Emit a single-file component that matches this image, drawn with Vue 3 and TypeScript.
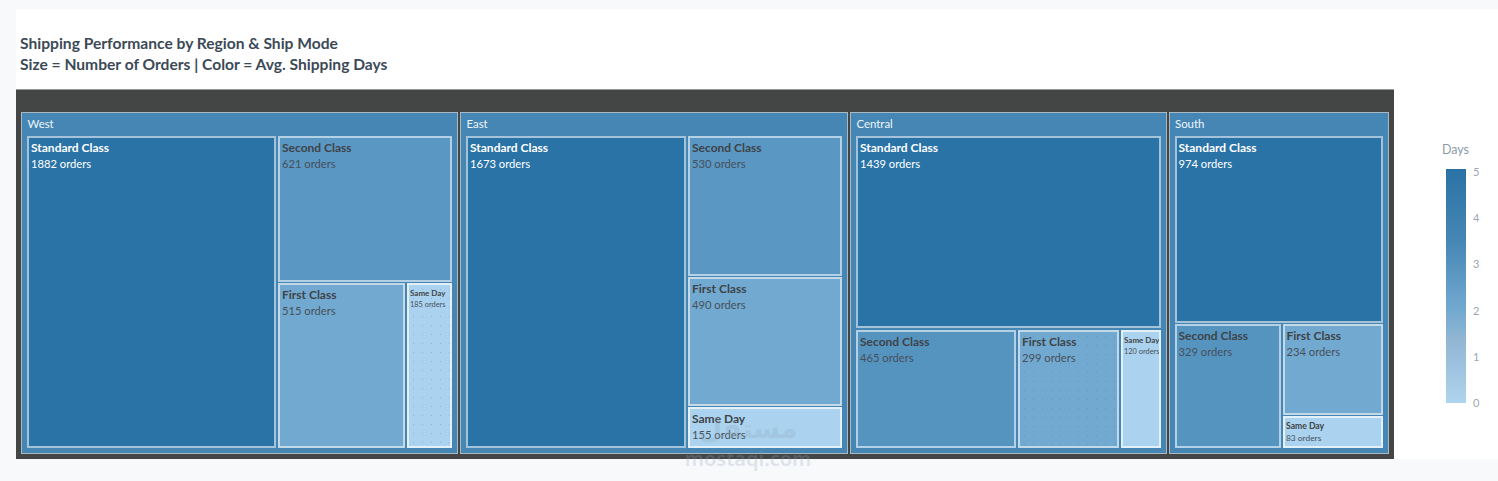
<script setup lang="ts">
const ticks: number[] = [5, 4, 3, 2, 1, 0]
</script>

<template>
  <div class="page">
    <div class="panel">
      <div class="head">
        <div class="titles">
          <div>Shipping Performance by Region &amp; Ship Mode</div>
          <div>Size = Number of Orders | Color = Avg. Shipping Days</div>
        </div>
      </div>
      <div class="chart">
        <div class="map">
          <section class="region west">
            <h3>West</h3>
            <div class="body row">
              <div class="leaf std w1"><b>Standard Class</b><span>1882 orders</span></div>
              <div class="col tight grow">
                <div class="leaf sec wsec"><b>Second Class</b><span>621 orders</span></div>
                <div class="row grow">
                  <div class="leaf fst grow"><b>First Class</b><span>515 orders</span></div>
                  <div class="leaf day tiny wsame dots"><b>Same Day</b><span>185 orders</span></div>
                </div>
              </div>
            </div>
          </section>
          <section class="region east">
            <h3>East</h3>
            <div class="body row">
              <div class="leaf std e1"><b>Standard Class</b><span>1673 orders</span></div>
              <div class="col tight grow">
                <div class="leaf sec esec"><b>Second Class</b><span>530 orders</span></div>
                <div class="leaf fst efst"><b>First Class</b><span>490 orders</span></div>
                <div class="leaf day grow"><b>Same Day</b><span>155 orders</span></div>
              </div>
            </div>
          </section>
          <section class="region central">
            <h3>Central</h3>
            <div class="body col">
              <div class="leaf std c1"><b>Standard Class</b><span>1439 orders</span></div>
              <div class="row grow">
                <div class="leaf sec2 csec dots"><b>Second Class</b><span>465 orders</span></div>
                <div class="leaf fst cfst dots"><b>First Class</b><span>299 orders</span></div>
                <div class="leaf day tiny grow"><b>Same Day</b><span>120 orders</span></div>
              </div>
            </div>
          </section>
          <section class="region south">
            <h3>South</h3>
            <div class="body col tight">
              <div class="leaf std s1"><b>Standard Class</b><span>974 orders</span></div>
              <div class="row grow">
                <div class="leaf sec2 ssec"><b>Second Class</b><span>329 orders</span></div>
                <div class="col tight grow">
                  <div class="leaf fst grow"><b>First Class</b><span>234 orders</span></div>
                  <div class="leaf day small ssame"><b>Same Day</b><span>83 orders</span></div>
                </div>
              </div>
            </div>
          </section>
        </div>
        <aside class="legend">
          <div class="legend-title">Days</div>
          <div class="scale">
            <div class="bar"></div>
            <div class="ticks">
              <span v-for="t in ticks" :key="t">{{ t }}</span>
            </div>
          </div>
        </aside>
      </div>
    </div>
    <div class="mark" aria-hidden="true">
      <div class="mark-ar">مستقل</div>
      <div class="mark-en">mostaqi.com</div>
    </div>
  </div>
</template>

<style>
html, body { margin: 0; background: #f8f9fb; }
</style>

<style scoped>
.page {
  position: relative;
  height: 481px;
  overflow: hidden;
  padding: 9px 0 0 16px;
  box-sizing: border-box;
  background: #f8f9fb;
  font-family: Lato, "Noto Sans", sans-serif;
}
.panel { background: #fff; height: 450px; display: flex; flex-direction: column; }
.head { height: 80px; box-sizing: border-box; padding: 24px 0 0 4px; }
.titles {
  font-size: 15.6px;
  line-height: 21px;
  font-weight: 700;
  color: #3c4a57;
}
.chart { display: flex; height: 370px; }
.map {
  width: 1378px;
  box-sizing: border-box;
  background: #444545;
  border-top: 1px solid #9a9a9a;
  padding: 22px 5px 5px;
  display: flex;
  gap: 2px;
}
.region {
  box-sizing: border-box;
  background: #4586b5;
  border: 1px solid #a9b9c4;
  padding: 0 5px 5px;
  display: flex;
  flex-direction: column;
}
.west { width: 437px; }
.east { width: 388px; }
.central { width: 316.5px; }
.south { width: 220.5px; }
.region h3 {
  margin: 0;
  height: 23px;
  padding-left: 0.5px;
  line-height: 22px;
  font-size: 11.4px;
  font-weight: 400;
  color: #eef5fa;
}
.body { flex: 1; min-height: 0; display: flex; gap: 2px; }
.row { display: flex; gap: 2px; }
.col { display: flex; flex-direction: column; gap: 2px; }
.col.tight { gap: 1px; }
.grow { flex: 1 1 0; min-width: 0; min-height: 0; }
.leaf {
  box-sizing: border-box;
  border: 2px solid #c3d9e8;
  padding: 2px 2px;
  font-size: 11.2px;
  line-height: 16px;
  color: #46505a;
  display: flex;
  flex-direction: column;
  overflow: hidden;
  white-space: nowrap;
}
.leaf b { font-size: 12px; font-weight: 700; color: #3e4347; }
.std { background: #2a73a6; color: #fff; border-color: #a4c3d9; }
.std b { color: #fff; }
.sec { background: #5a97c3; border-color: #b3d0e4; }
.sec2 { background: #5694c0; border-color: #b3d0e4; }
.fst { background: #72a9d0; border-color: #c3d9e8; }
.day { background: #abd3ef; border-color: #e4f0f8; }
.tiny { font-size: 7.4px; line-height: 11px; padding: 3px 1px; }
.tiny b { font-size: 8px; }
.small { font-size: 8.4px; line-height: 12px; padding: 2px 1.5px; }
.small b { font-size: 8.6px; }
.dots {
  background-image: radial-gradient(rgba(60, 110, 160, 0.3) 0.6px, transparent 0.8px);
  background-size: 9px 9px;
}
.w1 { width: 249px; }
.wsec { height: 146px; }
.wsame { width: 45px; }
.e1 { width: 220px; }
.esec { height: 140px; }
.efst { height: 129px; }
.c1 { height: 192px; }
.csec { width: 160px; }
.cfst { width: 101px; }
.s1 { height: 187px; }
.ssec { width: 106px; }
.ssame { height: 32px; }
.legend { position: relative; flex: 1; }
.legend-title {
  position: absolute;
  left: 48px;
  top: 53px;
  font-size: 12.4px;
  line-height: 16px;
  color: #8a9aa8;
}
.scale { position: absolute; left: 52px; top: 80px; display: flex; }
.bar {
  width: 20px;
  height: 234px;
  background-image:
    radial-gradient(rgba(255, 255, 255, 0.14) 0.5px, transparent 0.7px),
    linear-gradient(#2a72a5 0%, #4586b5 30%, #72a9d0 60%, #8fb5d2 72%, #afd4f0 100%);
  background-size: 2px 2px, 100% 100%;
}
.ticks {
  height: 241px;
  margin-left: 7px;
  margin-top: -2px;
  display: flex;
  flex-direction: column;
  justify-content: space-between;
  font-size: 11px;
  line-height: 10px;
  color: #98a8b5;
}
.mark {
  position: absolute;
  left: 673px;
  top: 410px;
  width: 150px;
  text-align: center;
  color: #8fa5b8;
  opacity: 0.25;
  pointer-events: none;
}
.mark-ar {
  font-family: "DejaVu Sans", sans-serif;
  font-size: 27px;
  line-height: 38px;
  font-weight: 700;
}
.mark-en {
  font-family: "Noto Sans", sans-serif;
  font-size: 20px;
  line-height: 22px;
  font-weight: 600;
}
</style>
